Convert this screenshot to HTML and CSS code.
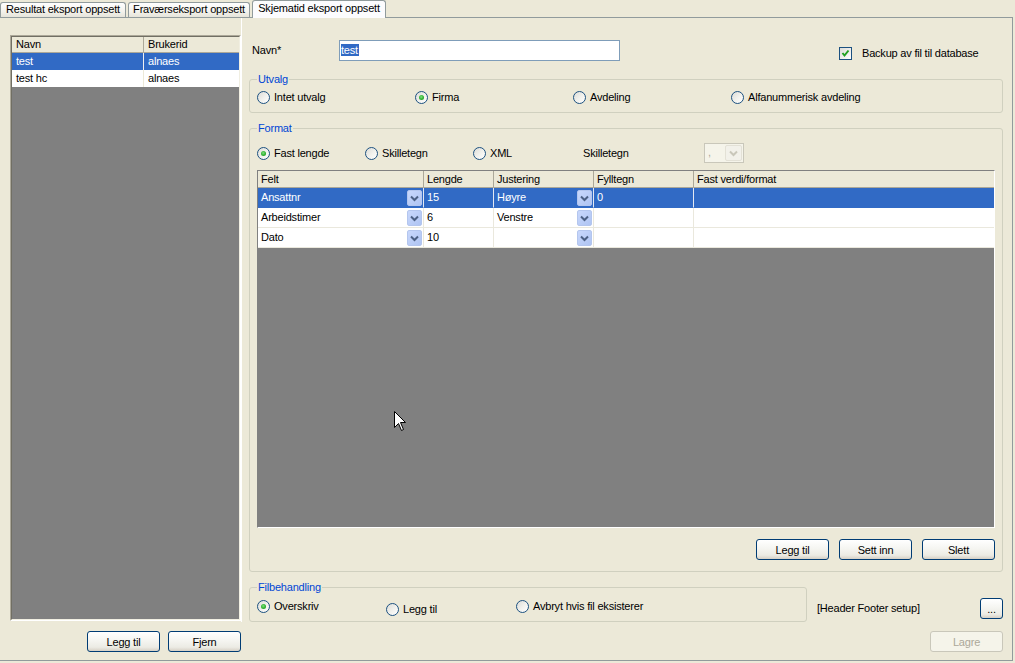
FILE: index.html
```html
<!DOCTYPE html>
<html>
<head>
<meta charset="utf-8">
<link rel="stylesheet" href="styles.css">
</head>
<body>
<div class="window">
  <div class="tabs">
    <div class="tab t1">Resultat eksport oppsett</div>
    <div class="tab t2">Fraværseksport oppsett</div>
    <div class="tab t3 active">Skjematid eksport oppsett</div>
  </div>
  <div class="page">
    <div class="left">
      <div class="list">
        <div class="list-in">
          <div class="lhead"><div class="lc1">Navn</div><div class="lc2">Brukerid</div></div>
          <div class="lrow sel"><div class="lc1">test</div><div class="lc2">alnaes</div></div>
          <div class="lrow"><div class="lc1">test hc</div><div class="lc2">alnaes</div></div>
        </div>
      </div>
      <div class="btnrow">
        <button class="btn">Legg til</button>
        <button class="btn">Fjern</button>
      </div>
    </div>
    <div class="right">
      <div class="main">
        <div class="namerow">
          <div class="namelbl">Navn*</div>
          <div class="textbox"><span class="selected-text">test</span></div>
          <div class="check"><svg width="11" height="11" viewBox="0 0 11 11"><path d="M2.5 5 L4.5 7.5 L8.5 2.5" fill="none" stroke="#21A121" stroke-width="2"/></svg></div>
          <div class="checklbl">Backup av fil til database</div>
        </div>

        <fieldset class="grp utvalg">
          <legend>Utvalg</legend>
          <div class="optrow">
            <div class="opt w158"><span class="radio"></span><span class="olbl">Intet utvalg</span></div>
            <div class="opt w158"><span class="radio on"></span><span class="olbl">Firma</span></div>
            <div class="opt w158"><span class="radio"></span><span class="olbl">Avdeling</span></div>
            <div class="opt"><span class="radio"></span><span class="olbl">Alfanummerisk avdeling</span></div>
          </div>
        </fieldset>

        <fieldset class="grp format">
          <legend>Format</legend>
          <div class="optrow tall">
            <div class="opt w108"><span class="radio on"></span><span class="olbl">Fast lengde</span></div>
            <div class="opt w108"><span class="radio"></span><span class="olbl">Skilletegn</span></div>
            <div class="opt w110"><span class="radio"></span><span class="olbl">XML</span></div>
            <div class="sklbl">Skilletegn</div>
            <div class="combo-dis">
              <span class="cd-text">,</span>
              <span class="cd-btn"><svg width="15" height="16" viewBox="0 0 15 16"><path d="M4 6.5 L7.5 10 L11 6.5" fill="none" stroke="#C9C7BA" stroke-width="2"/></svg></span>
            </div>
          </div>
          <div class="grid">
            <div class="gr ghead">
              <div class="gc c1">Felt</div>
              <div class="gc c2">Lengde</div>
              <div class="gc c3">Justering</div>
              <div class="gc c4">Fylltegn</div>
              <div class="gc c5">Fast verdi/format</div>
            </div>
            <div class="gr grow sel">
              <div class="gc c1 combo"><span>Ansattnr</span><span class="dd"><svg width="15" height="16" viewBox="0 0 15 16"><path d="M4 6.5 L7.5 10 L11 6.5" fill="none" stroke="#4D6185" stroke-width="2"/></svg></span></div>
              <div class="gc c2">15</div>
              <div class="gc c3 combo"><span>Høyre</span><span class="dd"><svg width="15" height="16" viewBox="0 0 15 16"><path d="M4 6.5 L7.5 10 L11 6.5" fill="none" stroke="#4D6185" stroke-width="2"/></svg></span></div>
              <div class="gc c4">0</div>
              <div class="gc c5"></div>
            </div>
            <div class="gr grow">
              <div class="gc c1 combo"><span>Arbeidstimer</span><span class="dd"><svg width="15" height="16" viewBox="0 0 15 16"><path d="M4 6.5 L7.5 10 L11 6.5" fill="none" stroke="#4D6185" stroke-width="2"/></svg></span></div>
              <div class="gc c2">6</div>
              <div class="gc c3 combo"><span>Venstre</span><span class="dd"><svg width="15" height="16" viewBox="0 0 15 16"><path d="M4 6.5 L7.5 10 L11 6.5" fill="none" stroke="#4D6185" stroke-width="2"/></svg></span></div>
              <div class="gc c4"></div>
              <div class="gc c5"></div>
            </div>
            <div class="gr grow">
              <div class="gc c1 combo"><span>Dato</span><span class="dd"><svg width="15" height="16" viewBox="0 0 15 16"><path d="M4 6.5 L7.5 10 L11 6.5" fill="none" stroke="#4D6185" stroke-width="2"/></svg></span></div>
              <div class="gc c2">10</div>
              <div class="gc c3 combo"><span></span><span class="dd"><svg width="15" height="16" viewBox="0 0 15 16"><path d="M4 6.5 L7.5 10 L11 6.5" fill="none" stroke="#4D6185" stroke-width="2"/></svg></span></div>
              <div class="gc c4"></div>
              <div class="gc c5"></div>
            </div>
          </div>
          <div class="gridbtns">
            <button class="btn">Legg til</button>
            <button class="btn">Sett inn</button>
            <button class="btn">Slett</button>
          </div>
        </fieldset>

        <div class="filrow">
          <fieldset class="grp fil">
            <legend>Filbehandling</legend>
            <div class="optrow">
              <div class="opt w129"><span class="radio on"></span><span class="olbl">Overskriv</span></div>
              <div class="opt w130 low"><span class="radio"></span><span class="olbl">Legg til</span></div>
              <div class="opt"><span class="radio"></span><span class="olbl">Avbryt hvis fil eksisterer</span></div>
            </div>
          </fieldset>
          <div class="hflbl">[Header Footer setup]</div>
          <button class="btn dots">...</button>
        </div>
      </div>
      <div class="foot">
        <button class="btn" disabled>Lagre</button>
      </div>
    </div>
  </div>
  <svg class="cursor" width="13" height="21" viewBox="0 0 13 21"><path d="M0.5 0.5 L0.5 16.5 L4.5 12.5 L7.5 19.5 L9.5 18.5 L6.5 11.5 L11.5 11.5 Z" fill="#fff" stroke="#000" stroke-width="1"/></svg>
</div>
</body>
</html>
```
FILE: styles.css
```css
html, body {
  margin: 0;
  padding: 0;
}
body {
  background: #ECE9D8;
  font-family: Tahoma, "Liberation Sans", Arial, sans-serif;
  font-size: 11px;
  letter-spacing: -0.2px;
  color: #000;
}
.window {
  width: 1015px;
  height: 663px;
  position: relative;
  overflow: hidden;
}

/* tabs */
.tabs {
  display: flex;
  align-items: flex-end;
  height: 17px;
  position: relative;
  z-index: 1;
}
.tab {
  box-sizing: border-box;
  height: 15px;
  line-height: 13px;
  border: 1px solid #919B9C;
  border-bottom: none;
  border-radius: 3px 3px 0 0;
  background: linear-gradient(#FFFFFF, #F3F2EC 60%, #E6E4DA);
  text-align: center;
  white-space: nowrap;
}
.t1 { width: 126px; }
.t2 { width: 122px; margin-left: 2px; }
.t3 { width: 134px; margin-left: 2px; }
.tab.active {
  height: 18px;
  margin-bottom: -1px;
  background: #FCFCFE;
  line-height: 15px;
}

/* page */
.page {
  box-sizing: border-box;
  width: 1013px;
  height: 644px;
  border-top: 1px solid #919B9C;
  border-right: 1px solid #919B9C;
  border-bottom: 1px solid #919B9C;
  display: flex;
}

/* left pane */
.left {
  box-sizing: border-box;
  width: 241px;
  padding: 17px 0 0 10px;
  display: flex;
  flex-direction: column;
}
.list {
  box-sizing: border-box;
  width: 231px;
  height: 586px;
  border: 1px solid;
  border-color: #ACA899 #FFFFFF #FFFFFF #ACA899;
}
.list-in {
  box-sizing: border-box;
  height: 100%;
  border: 1px solid;
  border-color: #716F64 #F1EFE2 #F1EFE2 #716F64;
  background: #808080;
}
.lhead, .lrow {
  display: flex;
}
.lhead {
  height: 16px;
  box-sizing: border-box;
  background: #ECE9D8;
  border-bottom: 1px solid #ACA899;
  line-height: 15px;
}
.lhead .lc1 { border-right: 1px solid #ACA899; }
.lrow {
  height: 17px;
  line-height: 17px;
  background: #fff;
}
.lrow .lc1 { border-right: 1px solid #ECE9D8; }
.lrow.sel {
  background: #316AC5;
  color: #fff;
}
.lrow.sel .lc1 { border-right-color: #F0F0F0; }
.lc1 {
  box-sizing: border-box;
  width: 132px;
  padding-left: 4px;
}
.lc2 {
  flex: 1;
  padding-left: 4px;
}
.btnrow {
  display: flex;
  justify-content: flex-end;
  gap: 8px;
  margin-top: 10px;
}

/* buttons */
.btn {
  box-sizing: border-box;
  width: 73px;
  height: 21px;
  padding: 0;
  border: 1px solid #003C74;
  border-radius: 3px;
  background: linear-gradient(#FFFFFF 0%, #F5F5F1 45%, #ECEBE4 80%, #D6D0C5 100%);
  font-family: inherit;
  font-size: 11px;
  letter-spacing: -0.2px;
  color: #000;
}
.btn:disabled {
  border-color: #C9C7BA;
  background: #F5F4EA;
  color: #ACA899;
}
.btn.dots {
  width: 23px;
  margin-left: auto;
  margin-bottom: 3px;
}

/* right pane */
.right {
  flex: 1;
  display: flex;
  flex-direction: column;
}
.main {
  box-sizing: border-box;
  height: 604px;
  border-left: 1px solid #FFFFFF;
  padding: 22px 9px 0 7px;
}
.foot {
  display: flex;
  justify-content: flex-end;
  padding: 9px 9px 0 0;
}

.namerow {
  display: flex;
  align-items: flex-start;
  height: 21px;
}
.namelbl {
  box-sizing: border-box;
  width: 90px;
  padding-left: 3px;
  line-height: 21px;
}
.textbox {
  box-sizing: border-box;
  width: 281px;
  height: 21px;
  border: 1px solid #7F9DB9;
  background: #fff;
  padding: 3px 0 0 1px;
  line-height: 13px;
}
.selected-text {
  background: #316AC5;
  color: #fff;
  padding: 0 1px 0 0;
}
.check {
  box-sizing: border-box;
  width: 13px;
  height: 13px;
  margin: 7px 0 0 219px;
  border: 1px solid #1C5180;
  background: linear-gradient(135deg, #DCDCD7, #FFFFFF);
  display: flex;
  align-items: center;
  justify-content: center;
}
.check svg { display: block; }
.checklbl {
  margin: 7px 0 0 10px;
  line-height: 13px;
}

/* group boxes */
.grp {
  box-sizing: border-box;
  width: 100%;
  margin: 0;
  min-width: 0;
  border: 1px solid #D0D0BF;
  border-radius: 3px;
}
.grp legend {
  padding: 0 1px;
  margin: 0;
  line-height: 13px;
  color: #0046D5;
}
.utvalg {
  margin-top: 12px;
  padding: 5px 7px 8px 7px;
}
.format {
  margin-top: 9px;
  padding: 8px 7px 11px 7px;
}
.filrow {
  display: flex;
  align-items: flex-end;
  margin-top: 9px;
}
.fil {
  width: 558px;
  padding: 6px 7px 8px 7px;
}
.hflbl {
  margin: 0 0 7px 10px;
  line-height: 13px;
}

.optrow {
  display: flex;
  align-items: center;
  height: 13px;
}
.optrow.tall { height: 20px; }
.opt {
  display: flex;
  align-items: center;
  height: 13px;
}
.opt.low { margin-top: 6px; }
.w158 { width: 158px; }
.w108 { width: 108px; }
.w110 { width: 110px; }
.w129 { width: 129px; }
.w130 { width: 130px; }
.olbl {
  margin-left: 4px;
  line-height: 13px;
  white-space: nowrap;
}
.radio {
  box-sizing: border-box;
  width: 13px;
  height: 13px;
  border-radius: 50%;
  border: 1px solid #1C5180;
  background: linear-gradient(135deg, #DCDCD7 0%, #F2F2EE 55%, #FFFFFF 100%);
  display: flex;
  align-items: center;
  justify-content: center;
  flex: none;
}
.radio.on::after {
  content: "";
  width: 5px;
  height: 5px;
  border-radius: 50%;
  background: radial-gradient(circle at 45% 40%, #7FE07F 0%, #2FB12F 55%, #1E8E1E 100%);
}
.sklbl {
  width: 121px;
  line-height: 13px;
}
.combo-dis {
  box-sizing: border-box;
  width: 40px;
  height: 20px;
  border: 1px solid #C9C7BA;
  background: #F5F4EA;
  display: flex;
  justify-content: space-between;
  align-items: stretch;
  padding: 1px;
}
.cd-text {
  color: #ACA899;
  padding-left: 2px;
  line-height: 15px;
}
.cd-btn {
  box-sizing: border-box;
  width: 17px;
  border: 1px solid #E3E1D6;
  border-radius: 2px;
  background: #F2F1EA;
  display: flex;
  align-items: center;
  justify-content: center;
}
.cd-btn svg { display: block; }

/* grid */
.grid {
  box-sizing: border-box;
  width: 738px;
  height: 358px;
  margin-top: 7px;
  border: 1px solid;
  border-color: #808080 #FFFFFF #FFFFFF #808080;
  background: #808080;
}
.gr {
  display: flex;
}
.gc {
  box-sizing: border-box;
  padding-left: 3px;
  white-space: nowrap;
  overflow: hidden;
}
.c1 { width: 166px; }
.c2 { width: 70px; }
.c3 { width: 100px; }
.c4 { width: 100px; }
.c5 { flex: 1; }
.ghead {
  height: 17px;
}
.ghead .gc {
  background: #ECE9D8;
  border-right: 1px solid #ACA899;
  border-bottom: 1px solid #ACA899;
  line-height: 16px;
}
.ghead .c5 { border-right: none; }
.grow {
  height: 20px;
  background: #fff;
}
.grow .gc {
  border-right: 1px solid #EAE8DD;
  border-bottom: 1px solid #EAE8DD;
  line-height: 19px;
  display: flex;
  align-items: center;
}
.grow .c5 { border-right: none; }
.grow.sel {
  background: #316AC5;
  color: #fff;
}
.grow.sel .gc { border-right-color: #E4E8F2; border-bottom-color: #316AC5; }
.gc.combo {
  justify-content: space-between;
}
.dd {
  box-sizing: border-box;
  width: 15px;
  height: 16px;
  margin-right: 1px;
  margin-top: 1px;
  border-radius: 2px;
  background: linear-gradient(135deg, #C9D8FC 0%, #B9CCF6 60%, #AFC4F3 100%);
  border: 1px solid #B4C6EE;
  display: flex;
  align-items: center;
  justify-content: center;
}
.dd svg { display: block; margin: -1px; }

.gridbtns {
  display: flex;
  justify-content: flex-end;
  gap: 10px;
  margin-top: 11px;
  padding-right: 0;
}

.cursor {
  position: absolute;
  left: 394px;
  top: 411px;
}
```
